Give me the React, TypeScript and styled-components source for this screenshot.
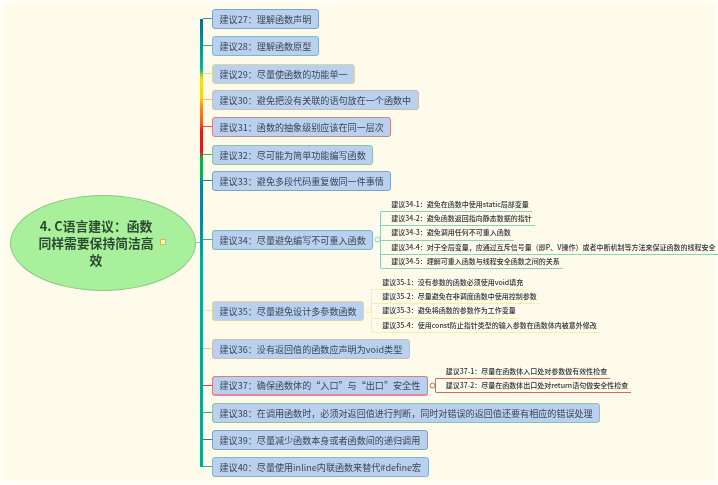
import React from "react";
import styled, { createGlobalStyle } from "styled-components";

const GlobalStyle = createGlobalStyle`
  html, body {
    margin: 0;
    padding: 0;
    background: #fffdf4;
  }
`;

const Page = styled.div`
  width: 718px;
  height: 485px;
  overflow: hidden;
  display: flex;
  align-items: center;
  padding-left: 10px;
  box-sizing: border-box;
  background: #fefbea;
  box-shadow: inset 0 0 4px 3px #fffef8;
  font-family: "Noto Sans CJK SC", "Noto Sans", sans-serif;
  color: #3b4654;
  filter: blur(0.35px);
`;

const Topic = styled.div`
  flex: none;
  width: 186px;
  height: 96px;
  box-sizing: border-box;
  display: flex;
  align-items: center;
  justify-content: center;
  gap: 6px;
  padding-right: 2px;
  border: 1px solid #8fc583;
  border-radius: 50%;
  background: #a9f09c;
`;

const TopicTitle = styled.div`
  width: 116px;
  font-size: 12.8px;
  line-height: 17px;
  font-weight: 700;
  text-align: center;
  color: #2c4a30;
`;

const NoteIcon = styled.span`
  width: 6px;
  height: 6px;
  margin-top: -1px;
  box-sizing: border-box;
  border: 1px solid #eeb04a;
  background: #fff3c6;
`;

const TopicLink = styled.div`
  flex: none;
  width: 4px;
  height: 1px;
  background: #7fc9b4;
`;

const Branches = styled.div`
  flex: none;
  display: flex;
  flex-direction: column;
  padding: 8px 0;
  background-image: linear-gradient(
    to bottom,
    #0d6b8c 0,
    #0f8d94 24px,
    #10b096 50px,
    #f7dc16 60px,
    #f8d810 78px,
    #f58c22 88px,
    #e86020 104px,
    #dd1b1b 112px,
    #dd1b1b 132px,
    #12ad52 140px,
    #12ad52 156px,
    #0a7fa8 166px,
    #0a84a4 200px,
    #0aa898 240px,
    #0aa88c 448px
  );
  background-repeat: no-repeat;
  background-position: 0 18px;
  background-size: 3px 448px;
`;

const Row = styled.div<{ $gap: number }>`
  display: flex;
  align-items: center;
  height: 20px;
  margin-top: ${(p) => p.$gap}px;
`;

const Stub = styled.div<{ $color: string }>`
  flex: none;
  width: 9px;
  height: 1px;
  margin-left: 3px;
  background: ${(p) => p.$color};
`;

const Node = styled.div<{ $color: string; $accent?: boolean }>`
  flex: none;
  height: 20px;
  box-sizing: border-box;
  display: flex;
  align-items: center;
  padding: 0 6.5px;
  border: 1.5px solid ${(p) => p.$color};
  border-bottom: ${(p) => (p.$accent ? "2px solid #ef7f9c" : `1.5px solid ${p.$color}`)};
  border-radius: 3px;
  background: #b9d0ee;
  font-size: 9.08px;
  white-space: nowrap;
`;

const Fold = styled.svg`
  flex: none;
  display: block;
  margin: 0 -1px 0 1px;
`;

const SubList = styled.div<{ $offset: number }>`
  flex: none;
  align-self: flex-start;
  margin-top: ${(p) => p.$offset}px;
  display: flex;
  flex-direction: column;
`;

const SubItem = styled.div<{ $color: string }>`
  align-self: flex-start;
  height: 14.4px;
  box-sizing: border-box;
  padding: 0 3px 0 10px;
  border-bottom: 1px solid ${(p) => p.$color};
  border-left: 1px solid transparent;
  font-size: 7px;
  font-weight: 500;
  line-height: 13px;
  white-space: nowrap;
  color: #2e333a;

  &:not(:first-child) {
    border-left-color: ${(p) => p.$color};
  }

  &:last-child {
    border-bottom-left-radius: 2px;
  }
`;

type Advice = {
  text: string;
  color: string;
  stub: string;
  gap: number;
  accent?: boolean;
  subs?: string[];
  subColor?: string;
  subOffset?: number;
};

const advices: Advice[] = [
  { text: "建议27\uFF1A理解函数声明", color: "#7ba4c8", stub: "#4a8a9c", gap: 0 },
  { text: "建议28\uFF1A理解函数原型", color: "#7fb6c8", stub: "#3f9fa5", gap: 7 },
  { text: "建议29\uFF1A尽量使函数的功能单一", color: "#d9d6a0", stub: "#f3e27a", gap: 8 },
  { text: "建议30\uFF1A避免把没有关联的语句放在一个函数中", color: "#c9bfae", stub: "#f2c08a", gap: 6 },
  { text: "建议31\uFF1A函数的抽象级别应该在同一层次", color: "#d57f86", stub: "#e0504e", gap: 7 },
  { text: "建议32\uFF1A尽可能为简单功能编写函数", color: "#8fc2a2", stub: "#4aa86a", gap: 8 },
  { text: "建议33\uFF1A避免多段代码重复做同一件事情", color: "#7ba4c8", stub: "#2f7f8f", gap: 6 },
  {
    text: "建议34\uFF1A尽量避免编写不可重入函数",
    color: "#7fb6c8",
    stub: "#46a89c",
    gap: 39,
    subColor: "#8fd0bc",
    subOffset: -32,
    subs: [
      "建议34-1\uFF1A避免在函数中使用static局部变量",
      "建议34-2\uFF1A避免函数返回指向静态数据的指针",
      "建议34-3\uFF1A避免调用任何不可重入函数",
      "建议34-4\uFF1A对于全局变量\uFF0C应通过互斥信号量\uFF08即P、V操作\uFF09或者中断机制等方法来保证函数的线程安全",
      "建议34-5\uFF1A理解可重入函数与线程安全函数之间的关系",
    ],
  },
  {
    text: "建议35\uFF1A尽量避免设计多参数函数",
    color: "#d9d6a0",
    stub: "#f3e890",
    gap: 51,
    subColor: "#f6efa8",
    subOffset: -25,
    subs: [
      "建议35-1\uFF1A没有参数的函数必须使用void填充",
      "建议35-2\uFF1A尽量避免在非调度函数中使用控制参数",
      "建议35-3\uFF1A避免将函数的参数作为工作变量",
      "建议35-4\uFF1A使用const防止指针类型的输入参数在函数体内被意外修改",
    ],
  },
  { text: "建议36\uFF1A没有返回值的函数应声明为void类型", color: "#c9bfae", stub: "#f2c890", gap: 18 },
  {
    text: "建议37\uFF1A确保函数体的\u201C入口\u201D与\u201C出口\u201D安全性",
    color: "#d57f86",
    stub: "#e0405a",
    gap: 17,
    accent: true,
    subColor: "#d9685c",
    subOffset: -11,
    subs: [
      "建议37-1\uFF1A尽量在函数体入口处对参数做有效性检查",
      "建议37-2\uFF1A尽量在函数体出口处对return语句做安全性检查",
    ],
  },
  {
    text: "建议38\uFF1A在调用函数时\uFF0C必须对返回值进行判断\uFF0C同时对错误的返回值还要有相应的错误处理",
    color: "#8fc2a2",
    stub: "#4aa878",
    gap: 7,
  },
  { text: "建议39\uFF1A尽量减少函数本身或者函数间的递归调用", color: "#7ba4c8", stub: "#2f7f8f", gap: 7 },
  { text: "建议40\uFF1A尽量使用inline内联函数来替代#define宏", color: "#7fb6c8", stub: "#46a89c", gap: 7 },
];

const topicTitle = "4. C语言建议\uFF1A函数同样需要保持简洁高效";

const App: React.FC = () => {
  return (
    <Page>
      <GlobalStyle />
      <Topic>
        <TopicTitle>{topicTitle}</TopicTitle>
        <NoteIcon />
      </Topic>
      <TopicLink />
      <Branches>
        {advices.map((item) => (
          <Row key={item.text} $gap={item.gap}>
            <Stub $color={item.stub} />
            <Node $color={item.color} $accent={item.accent}>
              {item.text}
            </Node>
            {item.subs && (
              <>
                <Fold width="7" height="7" viewBox="0 0 7 7">
                  <circle cx="3.5" cy="3.5" r="2.5" fill="#fefbea" stroke={item.subColor} />
                </Fold>
                <SubList $offset={item.subOffset ?? 0}>
                  {item.subs.map((sub) => (
                    <SubItem key={sub} $color={item.subColor ?? "#000"}>
                      {sub}
                    </SubItem>
                  ))}
                </SubList>
              </>
            )}
          </Row>
        ))}
      </Branches>
    </Page>
  );
};

export default App;
